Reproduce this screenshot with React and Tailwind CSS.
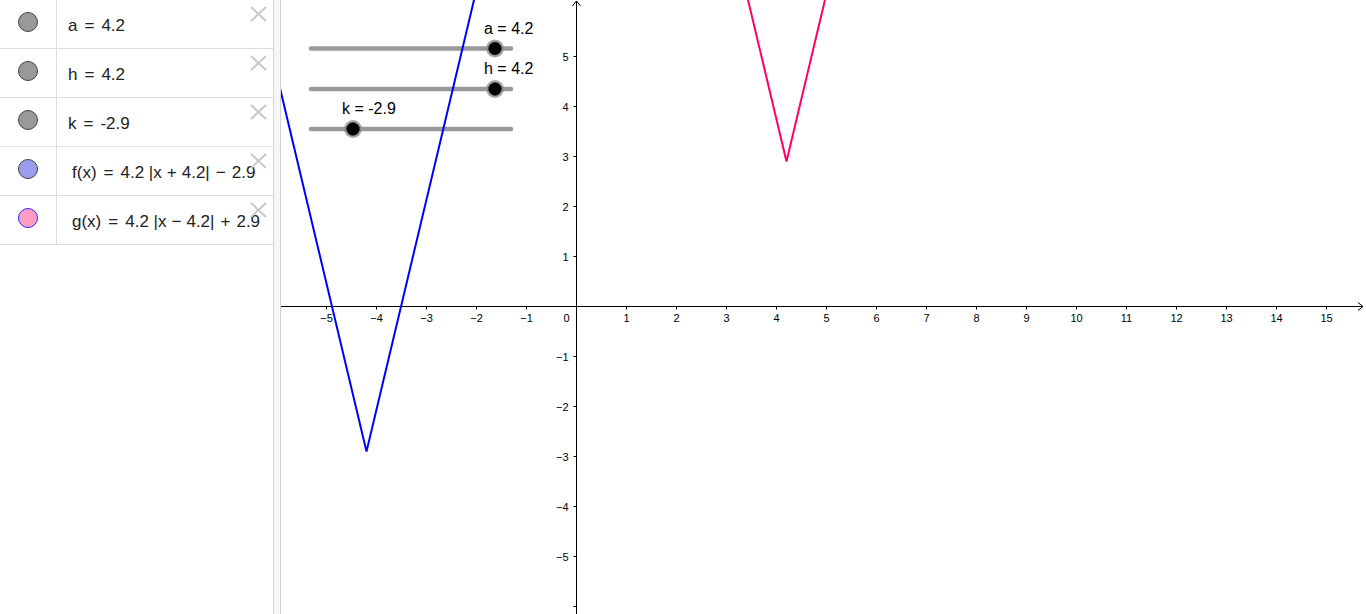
import React from 'react';

const rows = [
  { id: 'a', fill: '#999999', stroke: '#444444', pad: 'pl-[11px]' },
  { id: 'h', fill: '#999999', stroke: '#444444', pad: 'pl-[11px]' },
  { id: 'k', fill: '#999999', stroke: '#444444', pad: 'pl-[11px]' },
  { id: 'f', fill: '#9c9ced', stroke: '#444444', pad: 'pl-[15px]' },
  { id: 'g', fill: '#ff9cc4', stroke: '#2b2bff', pad: 'pl-[15px]' },
];

// graphics view: origin and scale (svg coords, view starts at x = 281)
const OX = 295.5;
const OY = 306.5;
const U = 50;
const sx = (x) => OX + x * U;
const sy = (y) => OY - y * U;

const f = (x) => 4.2 * Math.abs(x + 4.2) - 2.9;
const g = (x) => 4.2 * Math.abs(x - 4.2) + 2.9;

const CloseIcon = () => (
  <svg width="17" height="16" viewBox="0 0 17 16" className="absolute right-[6px] top-[6px]">
    <line x1="1" y1="1" x2="16" y2="15" stroke="#c8c8c8" strokeWidth="2" />
    <line x1="16" y1="1" x2="1" y2="15" stroke="#c8c8c8" strokeWidth="2" />
  </svg>
);

const Eq = ({ children, m = 'mx-[7px]' }) => <span className={m}>{children}</span>;

const RowText = ({ id }) => {
  if (id === 'a') return <>a<Eq>=</Eq>4.2</>;
  if (id === 'h') return <>h<Eq>=</Eq>4.2</>;
  if (id === 'k') return <>k<Eq>=</Eq>-2.9</>;
  if (id === 'f')
    return (
      <>
        f(x)<Eq>=</Eq>4.2 |x<Eq m="mx-[5px]">+</Eq>4.2|<Eq m="mx-[6px]">−</Eq>2.9
      </>
    );
  return (
    <>
      g(x)<Eq>=</Eq>4.2 |x<Eq m="mx-[5px]">−</Eq>4.2|<Eq m="mx-[6px]">+</Eq>2.9
    </>
  );
};

const Slider = ({ y, value, label, lx, ly }) => {
  const px = 311 - 281 + ((value + 5) / 10) * 200;
  return (
    <g>
      <line x1={311 - 281} y1={y} x2={511 - 281} y2={y} stroke="#999999" strokeWidth="4.5" strokeLinecap="round" />
      <circle cx={px} cy={y} r="9" fill="#8a8a8a" opacity="0.75" />
      <circle cx={px} cy={y} r="6.5" fill="#000000" stroke="#333" strokeWidth="0.5" />
      <text x={lx - 281} y={ly} fontSize="16" fill="#000" fontFamily="'Liberation Sans', Arial, sans-serif">
        {label}
      </text>
    </g>
  );
};

const Graphics = () => {
  const xs = [];
  for (let i = -5; i <= 15; i++) if (i !== 0) xs.push(i);
  const ys = [];
  for (let i = -6; i <= 5; i++) if (i !== 0) ys.push(i);
  const lbl = (n) => (n < 0 ? '−' + Math.abs(n) : String(n));

  return (
    <svg width="1085" height="614" viewBox="0 0 1085 614" className="block">
      {/* axes */}
      <line x1="0" y1={OY} x2="1082" y2={OY} stroke="#000" strokeWidth="1" />
      <polyline points={`1077,${OY - 4} 1082,${OY} 1077,${OY + 4}`} fill="none" stroke="#000" strokeWidth="1" />
      <line x1={OX} y1="1" x2={OX} y2="614" stroke="#000" strokeWidth="1" />
      <polyline points={`${OX - 4},6 ${OX},1 ${OX + 4},6`} fill="none" stroke="#000" strokeWidth="1" />

      {xs.map((i) => (
        <g key={'x' + i}>
          <line x1={sx(i)} y1={OY} x2={sx(i)} y2={OY + 3} stroke="#000" strokeWidth="1" />
          <text x={sx(i)} y="322" fontSize="11" textAnchor="middle" fill="#000" fontFamily="'Liberation Sans', Arial, sans-serif">
            {lbl(i)}
          </text>
        </g>
      ))}
      {ys.map((i) => (
        <g key={'y' + i}>
          <line x1={OX - 3} y1={sy(i)} x2={OX} y2={sy(i)} stroke="#000" strokeWidth="1" />
          {i > -6 && (
            <text x={OX - 8} y={sy(i) + 4} fontSize="11" textAnchor="end" fill="#000" fontFamily="'Liberation Sans', Arial, sans-serif">
              {lbl(i)}
            </text>
          )}
        </g>
      ))}
      <text x={OX - 7} y="322" fontSize="11" textAnchor="end" fill="#000" fontFamily="'Liberation Sans', Arial, sans-serif">
        0
      </text>

      {/* sliders */}
      <Slider y={48.5} value={4.2} label="a = 4.2" lx={484} ly={34} />
      <Slider y={89} value={4.2} label="h = 4.2" lx={484} ly={74} />
      <Slider y={129} value={-2.9} label="k = -2.9" lx={342} ly={114} />

      {/* functions */}
      <polyline
        points={[-7, -4.2, 0].map((x) => `${sx(x)},${sy(f(x))}`).join(' ')}
        fill="none"
        stroke="#0000ff"
        strokeWidth="2"
        strokeLinejoin="miter"
      />
      <polyline
        points={[2, 4.2, 6].map((x) => `${sx(x)},${sy(g(x))}`).join(' ')}
        fill="none"
        stroke="#ff0066"
        strokeWidth="2"
        strokeLinejoin="miter"
      />
    </svg>
  );
};

export default function App() {
  return (
    <div className="flex w-full h-[614px] overflow-hidden bg-white" style={{ fontFamily: "'Liberation Sans', Arial, sans-serif" }}>
      <div className="w-[274px] shrink-0 h-full border-r border-[#d6d6d6] bg-white">
        {rows.map((r) => (
          <div key={r.id} className="relative flex h-[49px] border-b border-[#dddddd]">
            <div className="w-[57px] shrink-0 border-r border-[#dddddd] flex justify-center pt-[12px]">
              <div
                className="w-[20px] h-[20px] rounded-full border"
                style={{ backgroundColor: r.fill, borderColor: r.stroke }}
              />
            </div>
            <div className={`flex-1 ${r.pad} pt-[14px] text-[17px] leading-6 text-[#222] whitespace-nowrap overflow-hidden`}>
              <RowText id={r.id} />
            </div>
            <CloseIcon />
          </div>
        ))}
      </div>
      <div className="w-[7px] shrink-0 h-full bg-[#f6f6f6] border-r border-[#d0d0d0]" />
      <div className="flex-1 h-full overflow-hidden">
        <Graphics />
      </div>
    </div>
  );
}
